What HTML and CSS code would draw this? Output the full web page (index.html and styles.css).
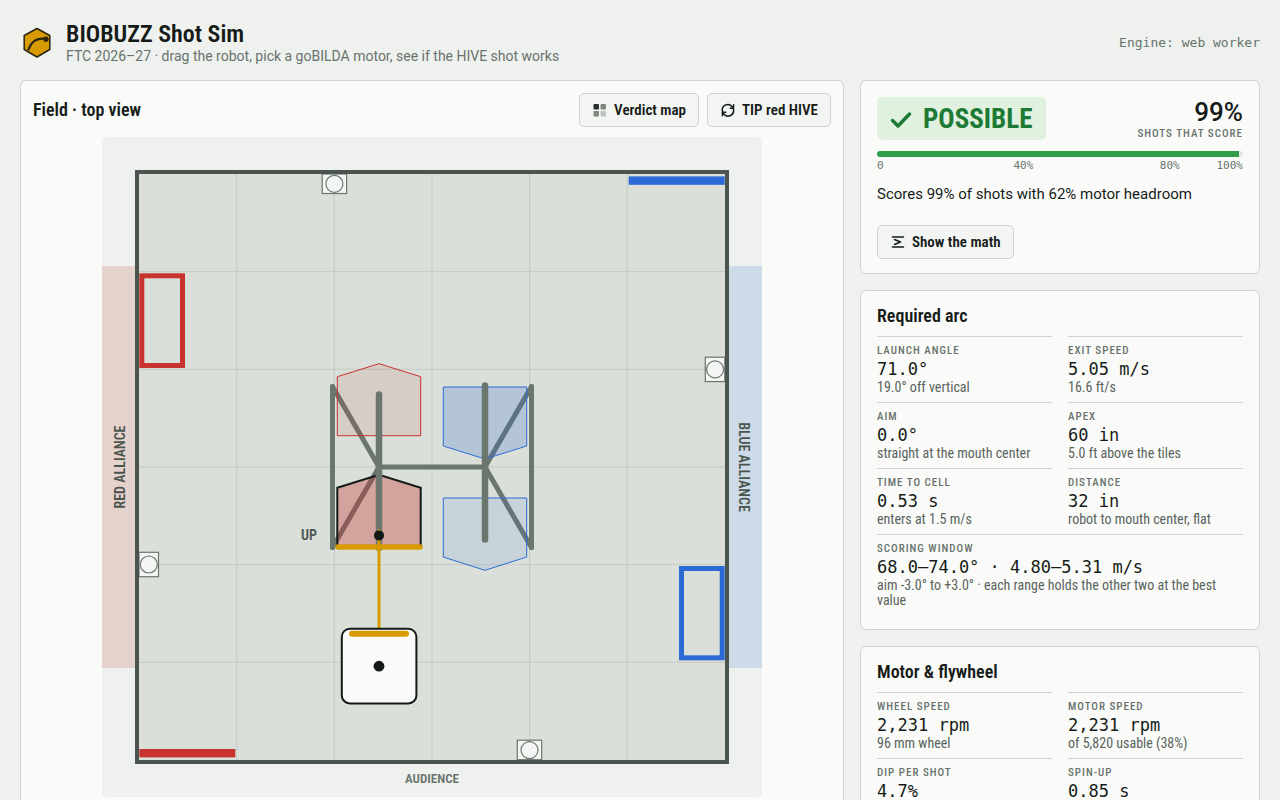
FILE: index.html
```html
<!DOCTYPE html>
<html lang="en">
<head>
    <meta charset="UTF-8">
    <meta name="viewport" content="width=device-width, initial-scale=1.0">
    <title>BIOBUZZ Shot Sim</title>
    <link rel="stylesheet" href="styles.css">
</head>
<body>
    <header class="topbar">
        <svg class="logo" viewBox="0 0 34 34" aria-hidden="true">
            <path d="M17 3.500 L29.800 10.500 V24.500 L17 32 L4.200 24.500 V10.500 Z" fill="#d79a00" stroke="#2a2410" stroke-width="1.500" stroke-linejoin="round"/>
            <path d="M8.500 24.500 C11 17 15.500 12.500 25 13.800" fill="none" stroke="#2a2410" stroke-width="2.200" stroke-linecap="round"/>
            <circle cx="26" cy="14.200" r="2.600" fill="#2a2410"/>
        </svg>
        <div class="brand">
            <h1>BIOBUZZ Shot Sim</h1>
            <p>FTC 2026–27 · drag the robot, pick a goBILDA motor, see if the HIVE shot works</p>
        </div>
        <span class="engine">Engine: web worker</span>
    </header>

    <main class="layout">
        <section class="card field-card">
            <div class="field-head">
                <h2>Field · top view</h2>
                <div class="actions">
                    <button type="button" class="btn">
                        <svg viewBox="0 0 16 16" aria-hidden="true">
                            <rect x="1.500" y="2" width="5.500" height="5.500" rx="1" fill="#2b302c"/>
                            <rect x="8.500" y="2" width="5.500" height="5.500" rx="1" fill="#808580"/>
                            <rect x="1.500" y="9" width="5.500" height="5.500" rx="1" fill="#808580"/>
                            <rect x="8.500" y="9" width="5.500" height="5.500" rx="1" fill="#bfc3bf"/>
                        </svg>
                        Verdict map
                    </button>
                    <button type="button" class="btn">
                        <svg viewBox="0 0 16 16" fill="none" stroke="currentColor" stroke-width="1.500" stroke-linecap="round" stroke-linejoin="round" aria-hidden="true">
                            <path d="M2.500 9.500 A5.500 5.500 0 0 1 12 4.500 L13.500 6.300 M13.600 2.800 V6.300 H10.300"/>
                            <path d="M13.500 7.500 A5.500 5.500 0 0 1 4 12.200 L2.500 10.300 M2.400 13.800 V10.300 H5.700"/>
                        </svg>
                        TIP red HIVE
                    </button>
                </div>
            </div>

            <svg class="field" viewBox="0 0 660 660" role="img" aria-label="Field, top view">
                <rect class="apron" width="660" height="660" rx="4"/>
                <rect class="zone-red" y="129" width="35" height="402"/>
                <rect class="zone-blue" x="625" y="129" width="35" height="402"/>
                <rect class="floor" x="35" y="35" width="590" height="590"/>

                <!-- tile seams -->
                <path class="seams" d="M134.700 37V623M232.300 37V623M330 37V623M427.700 37V623M525.300 37V623M37 134.700H623M37 232.300H623M37 330H623M37 427.700H623M37 525.300H623"/>

                <rect class="depot-red" x="39.800" y="138.800" width="40.700" height="89.700"/>
                <rect class="depot-blue" x="579.500" y="431.500" width="40.700" height="89.300"/>
                <rect x="526.700" y="39.400" width="96" height="8.400" fill="#2c6bd6"/>
                <rect x="37.300" y="612" width="96" height="8.400" fill="#c7332e"/>

                <!-- perimeter flowers -->
                <g class="flower">
                    <rect x="220.200" y="37" width="24.400" height="19.500"/>
                    <circle cx="232.400" cy="46.800" r="8.500"/>
                    <rect x="37" y="415.300" width="19.500" height="24.400"/>
                    <circle cx="46.800" cy="427.500" r="8.500"/>
                    <rect x="603.300" y="220.200" width="19.500" height="24.400"/>
                    <circle cx="613.100" cy="232.400" r="8.500"/>
                    <rect x="415.300" y="603.200" width="24.400" height="19.500"/>
                    <circle cx="427.500" cy="613.100" r="8.500"/>
                </g>
                <rect class="wall" x="35" y="35" width="590" height="590"/>

                <!-- hive frame and cells -->
                <g class="strut">
                    <path d="M230.500 249.500V410.500M429.500 249.500V410.500M277 330H383"/>
                    <path d="M230.500 249.500L277 330L230.500 410.500M429.500 249.500L383 330L429.500 410.500"/>
                </g>
                <path class="cell-red" d="M235.300 239.700L277 226.700L318.700 239.700V298.700H235.300Z"/>
                <path class="cell-active" d="M235.300 350.700L277 337.700L318.700 350.700V410H235.300Z"/>
                <path class="cell-blue raised" d="M341.300 250H424.700V309L383 322L341.300 309Z"/>
                <path class="cell-blue" d="M341.300 361H424.700V420L383 433.300L341.300 420Z"/>
                <path class="beam" d="M277 257.500V411M383 248.500V402.500"/>

                <!-- shot path -->
                <path d="M277 392.500V492" stroke="#d79a00" stroke-width="3"/>
                <path d="M236 410H318" stroke="#d79a00" stroke-width="5.500" stroke-linecap="round"/>
                <circle cx="277" cy="398.400" r="5" fill="#141a17"/>

                <rect x="239.800" y="491.800" width="74.600" height="74.600" rx="8" fill="#fafbf9" stroke="#141a17" stroke-width="2"/>
                <path d="M250 496.700H304" stroke="#d79a00" stroke-width="6" stroke-linecap="round"/>
                <circle cx="277" cy="529.200" r="5.400" fill="#141a17"/>

                <text class="label" x="207" y="403">UP</text>
                <text class="label" transform="translate(23 330) rotate(-90)">RED ALLIANCE</text>
                <text class="label" transform="translate(637 330) rotate(90)">BLUE ALLIANCE</text>
                <text class="label audience" x="330" y="646">AUDIENCE</text>
            </svg>
        </section>

        <aside class="side">
            <section class="card">
                <div class="verdict">
                    <div class="badge">
                        <svg viewBox="0 0 24 24" fill="none" stroke="currentColor" stroke-width="3.500" stroke-linecap="round" stroke-linejoin="round" aria-hidden="true">
                            <path d="M3.500 13.500 L9 19 L20.500 7"/>
                        </svg>
                        POSSIBLE
                    </div>
                    <div class="score">
                        <strong>99%</strong>
                        <span>Shots that score</span>
                    </div>
                </div>
                <div class="meter"><div class="meter-fill" style="width: 99%"></div></div>
                <div class="scale"><span>0</span><span>40%</span><span>80%</span><span>100%</span></div>
                <p class="summary">Scores 99% of shots with 62% motor headroom</p>
                <button type="button" class="btn">
                    <svg viewBox="0 0 16 16" fill="none" stroke="currentColor" stroke-width="1.500" stroke-linecap="round" stroke-linejoin="round" aria-hidden="true">
                        <path d="M2.500 3H13.500M2.500 13H13.500M4.500 5.500L10.500 8L4.500 10.500"/>
                    </svg>
                    Show the math
                </button>
            </section>

            <section class="card">
                <h2>Required arc</h2>
                <dl class="stats">
                    <div><dt>Launch angle</dt><dd class="value">71.0°</dd><dd>19.0° off vertical</dd></div>
                    <div><dt>Exit speed</dt><dd class="value">5.05 m/s</dd><dd>16.6 ft/s</dd></div>
                    <div><dt>Aim</dt><dd class="value">0.0°</dd><dd>straight at the mouth center</dd></div>
                    <div><dt>Apex</dt><dd class="value">60 in</dd><dd>5.0 ft above the tiles</dd></div>
                    <div><dt>Time to cell</dt><dd class="value">0.53 s</dd><dd>enters at 1.5 m/s</dd></div>
                    <div><dt>Distance</dt><dd class="value">32 in</dd><dd>robot to mouth center, flat</dd></div>
                    <div class="wide"><dt>Scoring window</dt><dd class="value">68.0–74.0° · 4.80–5.31 m/s</dd><dd>aim -3.0° to +3.0° · each range holds the other two at the best value</dd></div>
                </dl>
            </section>

            <section class="card">
                <h2>Motor &amp; flywheel</h2>
                <dl class="stats">
                    <div><dt>Wheel speed</dt><dd class="value">2,231 rpm</dd><dd>96 mm wheel</dd></div>
                    <div><dt>Motor speed</dt><dd class="value">2,231 rpm</dd><dd>of 5,820 usable (38%)</dd></div>
                    <div><dt>Dip per shot</dt><dd class="value">4.7%</dd></div>
                    <div><dt>Spin-up</dt><dd class="value">0.85 s</dd></div>
                </dl>
            </section>
        </aside>
    </main>
</body>
</html>
```
FILE: styles.css
```css
:root {
    --ink: #161b18;
    --muted: #69736d;
    --line: #cfd4cf;
    --card: #fafbf9;
    --bg: #eef1ee;
    --cond: "Roboto Condensed", "Liberation Sans Narrow", Roboto, sans-serif;
    --mono: "DejaVu Sans Mono", monospace;
}

* {
    box-sizing: border-box;
}

body {
    margin: 0;
    padding: 16px 20px 20px;
    background: var(--bg);
    color: var(--ink);
    font-family: Roboto, sans-serif;
    font-size: 15px;
}

h1, h2, p, dl, dd {
    margin: 0;
}

/* Header */
.topbar {
    display: flex;
    align-items: center;
    gap: 12px;
    height: 52px;
    margin-bottom: 12px;
}

.logo {
    width: 34px;
    height: 34px;
}

.brand {
    flex: 1;
}

.brand h1 {
    font-family: var(--cond);
    font-size: 24px;
    font-weight: 600;
    line-height: 28px;
}

.brand p {
    font-size: 14px;
    line-height: 16px;
    color: var(--muted);
}

.engine {
    font-family: var(--mono);
    font-size: 13px;
    color: var(--muted);
}

/* Layout */
.layout {
    display: grid;
    grid-template-columns: minmax(0, 1fr) 400px;
    gap: 16px;
    align-items: start;
}

.side {
    display: grid;
    gap: 16px;
}

.card {
    background: var(--card);
    border: 1px solid var(--line);
    border-radius: 6px;
    padding: 16px 16px 14px;
}

.field-card {
    padding: 12px;
}

h2 {
    font-family: var(--cond);
    font-size: 18px;
    font-weight: 600;
    line-height: 18px;
}

.btn {
    display: flex;
    align-items: center;
    gap: 6px;
    height: 34px;
    padding: 0 12px;
    border: 1px solid var(--line);
    border-radius: 5px;
    background: #f2f5f2;
    color: var(--ink);
    font-family: var(--cond);
    font-size: 15px;
    font-weight: 600;
    cursor: pointer;
}

.btn svg {
    width: 16px;
    height: 16px;
}

/* Field */
.field-head {
    display: flex;
    justify-content: space-between;
    align-items: center;
    margin-bottom: 10px;
}

.actions {
    display: flex;
    gap: 8px;
}

.field {
    display: block;
    width: 100%;
    max-width: 660px;
    margin: 0 auto;
}

.apron { fill: #eef1ee; }
.zone-red { fill: #e6d2cd; }
.zone-blue { fill: #cddbe8; }
.floor { fill: #dadfd9; }
.wall { fill: none; stroke: #4b554f; stroke-width: 4; }
.seams { stroke: #c3cac4; stroke-width: 1; }
.depot-red { fill: none; stroke: #c7332e; stroke-width: 5; }
.depot-blue { fill: none; stroke: #2c6bd6; stroke-width: 5; }
.flower { fill: #f3f6f3; stroke: #6b766f; stroke-width: 1.2; }
.strut { fill: none; stroke: #6b766f; stroke-width: 5; stroke-linecap: round; }
.beam { stroke: #6b766f; stroke-width: 6.5; stroke-linecap: round; }
.cell-red { fill: rgba(199, 51, 46, 0.1); stroke: #c7332e; }
.cell-active { fill: rgba(199, 51, 46, 0.35); stroke: #141a17; stroke-width: 2; }
.cell-blue { fill: rgba(44, 107, 214, 0.1); stroke: #2c6bd6; }
.cell-blue.raised { fill: rgba(44, 107, 214, 0.22); }

.label {
    font-family: var(--cond);
    font-size: 14px;
    font-weight: 600;
    text-anchor: middle;
    fill: #4b554f;
}

.audience {
    font-size: 13px;
    fill: var(--muted);
}

/* Verdict */
.verdict {
    display: flex;
    justify-content: space-between;
    align-items: flex-start;
    margin-bottom: 10px;
}

.badge {
    display: flex;
    align-items: center;
    gap: 10px;
    height: 43px;
    padding: 0 14px 0 12px;
    border-radius: 5px;
    background: #e0f1df;
    color: #1c7a35;
    font-family: var(--cond);
    font-size: 27px;
    font-weight: 700;
}

.badge svg {
    width: 24px;
    height: 24px;
}

.score {
    text-align: right;
}

.score strong {
    display: block;
    font-size: 26px;
    font-weight: 500;
    line-height: 30px;
}

.score span,
.stats dt {
    font-family: var(--cond);
    font-size: 11px;
    font-weight: 500;
    line-height: 14px;
    letter-spacing: 1px;
    text-transform: uppercase;
    color: var(--muted);
}

.score span {
    display: block;
}

.meter {
    height: 6px;
    border-radius: 3px;
    background: #e3e7e3;
    overflow: hidden;
}

.meter-fill {
    height: 100%;
    background: #2f9e49;
}

.scale {
    display: grid;
    grid-template-columns: 4fr 4fr 1fr 1fr;
    font-family: var(--mono);
    font-size: 11px;
    line-height: 18px;
    color: var(--muted);
}

.scale span:nth-child(2),
.scale span:nth-child(3) {
    justify-self: start;
    transform: translateX(-50%);
}

.scale span:last-child {
    justify-self: end;
}

.summary {
    margin: 8px 0 20px;
    line-height: 22px;
}

/* Stats */
.stats {
    display: grid;
    grid-template-columns: 1fr 1fr;
    column-gap: 16px;
    margin-top: 11px;
}

.stats > div {
    padding: 7px 0;
    border-top: 1px solid var(--line);
}

.stats .wide {
    grid-column: 1 / -1;
}

.stats dd {
    font-family: var(--cond);
    font-size: 14px;
    line-height: 15px;
    color: #59635d;
}

.stats .value {
    font-family: var(--mono);
    font-size: 17px;
    line-height: 22px;
    color: var(--ink);
}
```
